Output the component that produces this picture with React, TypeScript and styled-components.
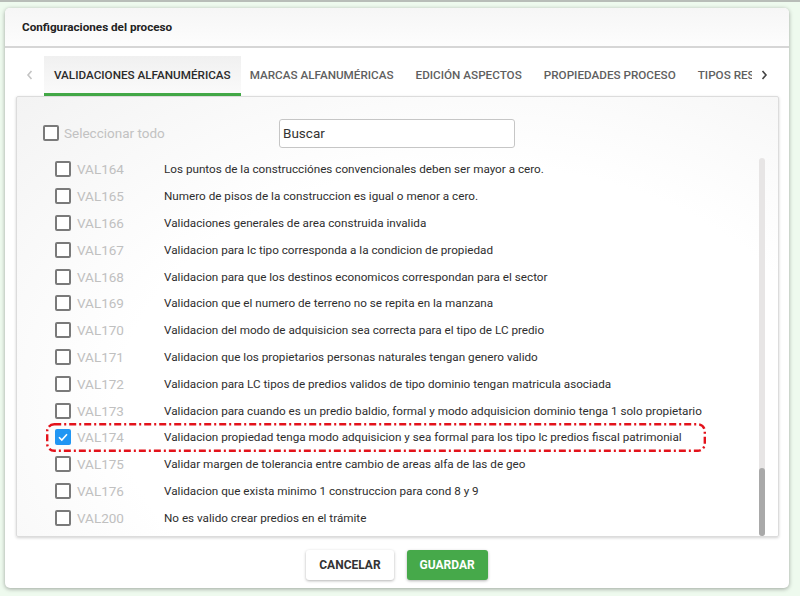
import React, { useState } from 'react'
import styled, { createGlobalStyle } from 'styled-components'

const GlobalStyle = createGlobalStyle`
  html, body {
    margin: 0;
    padding: 0;
    background: #eefaee;
    font-family: Roboto, "Liberation Sans", Arial, sans-serif;
  }
`

const Page = styled.div`
  width: 800px;
  height: 596px;
  box-sizing: border-box;
  border-top: 2px solid #b8bdb8;
  padding: 6px 11px 8px 5px;
`

const Card = styled.div`
  height: 100%;
  display: flex;
  flex-direction: column;
  background: #fff;
  border-radius: 5px;
  box-shadow: 0 1px 4px rgba(0, 0, 0, 0.35);
  overflow: hidden;
`

const Header = styled.div`
  height: 38px;
  display: flex;
  align-items: center;
  padding-left: 17px;
  font-size: 11.7px;
  font-weight: 700;
  color: #222;
  background: linear-gradient(#f6f6f6, #fdfdfd);
  border-bottom: 2px solid #d6d6d6;
`

const TabsBar = styled.div`
  display: flex;
  align-items: stretch;
  height: 40px;
  margin-top: 8px;
  padding-left: 11px;
  padding-right: 13px;
`

const Chevron = styled.div<{ $dim?: boolean }>`
  width: ${({ $dim }) => ($dim ? '28px' : '24px')};
  display: flex;
  align-items: center;
  justify-content: center;
  padding-bottom: 2px;
  color: ${({ $dim }) => ($dim ? '#c4c4c4' : '#444')};
`

const TabStrip = styled.div`
  flex: 1;
  display: flex;
  overflow: hidden;
  white-space: nowrap;
`

const Tab = styled.div<{ $active?: boolean }>`
  display: flex;
  align-items: center;
  padding: ${({ $active }) => ($active ? '0 10px' : '0 13px 0 9px')};
  font-size: 11.7px;
  font-weight: 500;
  color: ${({ $active }) => ($active ? '#2b2b2b' : '#5f5f5f')};
  background: ${({ $active }) => ($active ? 'linear-gradient(#f0f0f0, #fafafa)' : 'transparent')};
  border-bottom: 3px solid ${({ $active }) => ($active ? '#43a947' : 'transparent')};
  box-sizing: border-box;
`

const Panel = styled.div`
  flex: 1;
  margin: 0 10px 0 11px;
  display: flex;
  flex-direction: column;
  border: 1px solid #dcdcdc;
  border-radius: 2px;
  background: radial-gradient(ellipse at 60% 70%, #ffffff 55%, #f3f3f3 100%);
  box-shadow: 0 1px 3px rgba(0, 0, 0, 0.18);
`

const Toolbar = styled.div`
  display: flex;
  align-items: center;
  height: 30px;
  margin-top: 21px;
  padding-left: 26px;
`

const SelectAll = styled.label`
  display: flex;
  align-items: center;
  gap: 5px;
  width: 236px;
  font-size: 13.5px;
  color: #c2c2c2;
`

const Search = styled.input`
  width: 236px;
  height: 29px;
  box-sizing: border-box;
  border: 1px solid #c6c6c6;
  border-radius: 3px;
  padding: 0 3px;
  font-family: inherit;
  font-size: 13.5px;
  color: #333;
  background: #fff;
  outline: none;
  &::placeholder {
    color: #333;
  }
`

const ListArea = styled.div`
  flex: 1;
  display: flex;
  margin-top: 8px;
  padding: 0 13px 0 29px;
`

const List = styled.div`
  flex: 1;
`

const Row = styled.div`
  position: relative;
  height: 26.8px;
  display: flex;
  align-items: center;
  padding-left: 9px;
`

const Code = styled.span`
  width: 87px;
  margin-left: 6px;
  font-size: 13.5px;
  color: #c0c0c0;
`

const Desc = styled.span`
  font-size: 11.7px;
  color: #2e2e2e;
  white-space: nowrap;
`

const Highlight = styled.svg`
  position: absolute;
  left: 0;
  top: -1px;
  width: 660px;
  height: 29px;
  pointer-events: none;
  overflow: visible;
`

const Box = styled.span<{ $checked?: boolean }>`
  flex: none;
  width: 16px;
  height: 16px;
  box-sizing: border-box;
  border-radius: 2px;
  border: ${({ $checked }) => ($checked ? 'none' : '2px solid #7a7a7a')};
  background: ${({ $checked }) => ($checked ? '#2196f3' : '#fff')};
  display: flex;
  align-items: center;
  justify-content: center;
`

const ScrollTrack = styled.div`
  width: 6px;
  margin-top: 2px;
  border-radius: 3px;
  background: #e7e5e5;
  display: flex;
  flex-direction: column;
  justify-content: flex-end;
`

const ScrollThumb = styled.div`
  height: 68px;
  border-radius: 3px;
  background: #a9a9a9;
`

const Footer = styled.div`
  height: 51px;
  display: flex;
  justify-content: center;
  align-items: flex-start;
  gap: 13px;
  padding-top: 13px;
  box-sizing: border-box;
`

const Button = styled.button<{ $primary?: boolean }>`
  height: 30px;
  padding: 0 13px;
  border: none;
  border-radius: 3px;
  font-family: inherit;
  font-size: 12px;
  font-weight: 700;
  color: ${({ $primary }) => ($primary ? '#fff' : '#333')};
  background: ${({ $primary }) => ($primary ? '#46a94a' : '#fff')};
  box-shadow: 0 1px 3px rgba(0, 0, 0, 0.3);
`

const Check: React.FC<{ checked?: boolean }> = ({ checked }) => (
  <Box $checked={checked}>
    {checked && (
      <svg width="12" height="12" viewBox="0 0 12 12">
        <path d="M2 6.2 L4.8 9 L10 3.2" fill="none" stroke="#fff" strokeWidth="1.6" />
      </svg>
    )}
  </Box>
)

const ChevronIcon: React.FC<{ dir: 'left' | 'right' }> = ({ dir }) => (
  <svg width="10" height="12" viewBox="0 0 10 12">
    <path
      d={dir === 'left' ? 'M6.5 2 L3 6 L6.5 10' : 'M3.5 2 L7 6 L3.5 10'}
      fill="none"
      stroke="currentColor"
      strokeWidth="1.6"
    />
  </svg>
)

const tabs = [
  'VALIDACIONES ALFANUMÉRICAS',
  'MARCAS ALFANUMÉRICAS',
  'EDICIÓN ASPECTOS',
  'PROPIEDADES PROCESO',
  'TIPOS RESOLUCIÓN',
]

const rows = [
  ['VAL164', 'Los puntos de la construcciónes convencionales deben ser mayor a cero.'],
  ['VAL165', 'Numero de pisos de la construccion es igual o menor a cero.'],
  ['VAL166', 'Validaciones generales de area construida invalida'],
  ['VAL167', 'Validacion para lc tipo corresponda a la condicion de propiedad'],
  ['VAL168', 'Validacion para que los destinos economicos correspondan para el sector'],
  ['VAL169', 'Validacion que el numero de terreno no se repita en la manzana'],
  ['VAL170', 'Validacion del modo de adquisicion sea correcta para el tipo de LC predio'],
  ['VAL171', 'Validacion que los propietarios personas naturales tengan genero valido'],
  ['VAL172', 'Validacion para LC tipos de predios validos de tipo dominio tengan matricula asociada'],
  ['VAL173', 'Validacion para cuando es un predio baldio, formal y modo adquisicion dominio tenga 1 solo propietario'],
  ['VAL174', 'Validacion propiedad tenga modo adquisicion y sea formal para los tipo lc predios fiscal patrimonial'],
  ['VAL175', 'Validar margen de tolerancia entre cambio de areas alfa de las de geo'],
  ['VAL176', 'Validacion que exista minimo 1 construccion para cond 8 y 9'],
  ['VAL200', 'No es valido crear predios en el trámite'],
]

const App: React.FC = () => {
  const [search, setSearch] = useState('')
  const [active] = useState(0)

  return (
    <>
      <GlobalStyle />
      <Page>
        <Card>
          <Header>Configuraciones del proceso</Header>
          <TabsBar>
            <Chevron $dim>
              <ChevronIcon dir="left" />
            </Chevron>
            <TabStrip>
              {tabs.map((t, i) => (
                <Tab key={t} $active={i === active}>
                  {t}
                </Tab>
              ))}
            </TabStrip>
            <Chevron>
              <ChevronIcon dir="right" />
            </Chevron>
          </TabsBar>
          <Panel>
            <Toolbar>
              <SelectAll>
                <Check />
                Seleccionar todo
              </SelectAll>
              <Search
                placeholder="Buscar"
                value={search}
                onChange={(e) => setSearch(e.target.value)}
              />
            </Toolbar>
            <ListArea>
              <List>
                {rows.map(([code, desc]) => (
                  <Row key={code}>
                    <Check checked={code === 'VAL174'} />
                    <Code>{code}</Code>
                    <Desc>{desc}</Desc>
                    {code === 'VAL174' && (
                      <Highlight viewBox="0 0 660 29">
                        <rect
                          x="1.2"
                          y="1.2"
                          width="657.6"
                          height="26.6"
                          rx="7"
                          fill="none"
                          stroke="#e3121b"
                          strokeWidth="2.4"
                          strokeDasharray="7 3 2 3"
                        />
                      </Highlight>
                    )}
                  </Row>
                ))}
              </List>
              <ScrollTrack>
                <ScrollThumb />
              </ScrollTrack>
            </ListArea>
          </Panel>
          <Footer>
            <Button>CANCELAR</Button>
            <Button $primary>GUARDAR</Button>
          </Footer>
        </Card>
      </Page>
    </>
  )
}

export default App
